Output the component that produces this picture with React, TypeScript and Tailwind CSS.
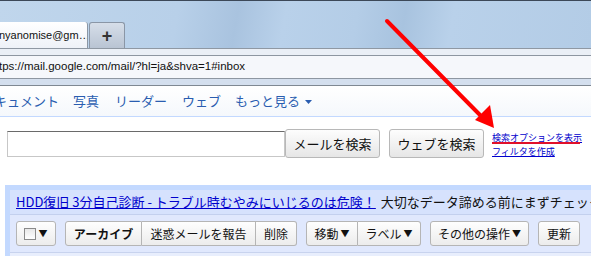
import React from "react";

const jp = { fontFamily: '"Noto Sans CJK JP", "Noto Sans", sans-serif' };
const lat = { fontFamily: '"Liberation Sans", "Noto Sans CJK JP", sans-serif' };

function TBtn({ children, className = "" }: { children: React.ReactNode; className?: string }) {
  return (
    <div
      className={`h-[25px] flex items-center justify-center border border-[#b5b5b5] bg-[linear-gradient(#fefefe,#ececec)] text-[12px] text-[#111] leading-none ${className}`}
      style={jp}
    >
      {children}
    </div>
  );
}

export default function App() {
  return (
    <div className="relative w-[591px] h-[256px] overflow-hidden bg-white">
      {/* browser title area */}
      <div className="h-[48px] border-t border-[#3c4858] bg-[linear-gradient(100deg,#c0d6ec_0%,#b8d0e9_30%,#a9c3df_40%,#b9d1ea_48%,#b4cde7_60%,#a8c3df_68%,#b9d1ea_76%,#b3cce6_100%)] flex items-end">
        <div className="w-[88px] h-[26px] bg-[linear-gradient(#ffffff,#eef2f8)] border-r border-[#8b96a4] rounded-tr-[3px] flex items-center overflow-hidden">
          <span className="text-[11px] text-[#111] whitespace-nowrap ml-[-1px]" style={lat}>
            nyanomise@gm…
          </span>
        </div>
        <div className="ml-[1px] w-[36px] h-[26px] bg-[linear-gradient(#d6dee9,#b9c4d3)] border border-b-0 border-[#8a96a6] rounded-t-[3px] flex items-center justify-center">
          <span className="text-[18px] font-bold text-[#333] leading-none" style={lat}>+</span>
        </div>
      </div>
      {/* toolbar / url */}
      <div className="h-[7px] border-t border-[#8f98a3] bg-[#eaeff6]" />
      <div className="h-[24px] border-t border-[#8d96a1] border-b bg-[#f5f7fb] flex items-center">
        <span className="text-[11.5px] text-[#111] whitespace-nowrap ml-[-1px]" style={lat}>
          tps://mail.google.com/mail/?hl=ja&amp;shva=1#inbox
        </span>
      </div>
      <div className="h-[7px] bg-[#d4dfee] border-b border-[#7f8892]" />
      {/* gmail nav */}
      <div className="h-[31px] bg-[linear-gradient(#ffffff,#f5f8fc)] border-b border-[#c3d9ff] flex items-center text-[13px] text-[#2a5db0] whitespace-nowrap" style={jp}>
        <span className="ml-[-19px]">ドキュメント</span>
        <span className="ml-[14px]">写真</span>
        <span className="ml-[16px]">リーダー</span>
        <span className="ml-[15px]">ウェブ</span>
        <span className="ml-[14px]">もっと見る</span>
        <svg className="ml-[5px] mt-[2px]" width="7" height="4" viewBox="0 0 7 4">
          <polygon points="0,0 7,0 3.5,4" fill="#2a5db0" />
        </svg>
      </div>
      {/* search row */}
      <div className="flex items-start pt-[12px] pl-[7px] h-[68px]">
        <div className="mt-[2px] w-[278px] h-[26px] border border-[#c7c7c7] border-t-[#6a6a6a] bg-white" />
        <div className="w-[95px] h-[29px] rounded-[3px] border border-[#b8b8b8] bg-[linear-gradient(#fdfdfd,#e6e6e6)] flex items-center justify-center text-[13px] text-[#111]" style={jp}>
          メールを検索
        </div>
        <div className="ml-[9px] w-[95px] h-[29px] rounded-[3px] border border-[#b8b8b8] bg-[linear-gradient(#fdfdfd,#e6e6e6)] flex items-center justify-center text-[13px] text-[#111]" style={jp}>
          ウェブを検索
        </div>
        <div className="ml-[8px] mt-[2px] flex flex-col text-[9px] leading-[14px] text-[#0000cc]" style={jp}>
          <span className="underline whitespace-nowrap">検索オプションを表示</span>
          <span className="underline whitespace-nowrap">フィルタを作成</span>
        </div>
      </div>
      {/* ad + toolbar box */}
      <div className="flex">
        <div className="w-[2px] h-[15px] bg-[#dde6f7]" />
        <div className="ml-[5px] flex-1 bg-[#c3d9ff] pt-[5px] pl-[5px]">
          <div className="bg-[#d6e2fd] h-[24px] flex items-center pl-[6px] whitespace-nowrap text-[13px]" style={jp}>
            <span className="text-[#0000cc] underline">HDD復旧 3分自己診断 - トラブル時むやみにいじるのは危険！</span>
            <span className="ml-[5px] text-[#111]">大切なデータ諦める前にまずチェック</span>
          </div>
          <div className="h-px bg-[#c3d0ee]" />
          <div className="bg-[#e0e8fd] h-[37px] flex items-center pl-[6px]">
            <TBtn className="w-[40px] rounded-[3px]">
              <span className="w-[12px] h-[12px] border border-[#8a8a8a] bg-[linear-gradient(#e8e8e8,#ffffff)]" />
              <span className="ml-[2px] text-[9px]">▼</span>
            </TBtn>
            <TBtn className="ml-[9px] w-[77px] rounded-l-[3px] font-bold">アーカイブ</TBtn>
            <TBtn className="w-[114px] border-l-0">迷惑メールを報告</TBtn>
            <TBtn className="w-[41px] border-l-0 rounded-r-[3px]">削除</TBtn>
            <TBtn className="ml-[9px] w-[52px] rounded-l-[3px]">
              移動<span className="ml-[2px] text-[9px]">▼</span>
            </TBtn>
            <TBtn className="w-[63px] border-l-0 rounded-r-[3px]">
              ラベル<span className="ml-[2px] text-[9px]">▼</span>
            </TBtn>
            <TBtn className="ml-[9px] w-[99px] rounded-[3px]">
              その他の操作<span className="ml-[2px] text-[9px]">▼</span>
            </TBtn>
            <TBtn className="ml-[9px] w-[42px] rounded-[3px]">更新</TBtn>
          </div>
          <div className="h-px bg-[#c8d3ee]" />
          <div className="h-[10px] bg-[#e8eefd]" />
        </div>
      </div>
      {/* annotations */}
      <div className="absolute left-[492px] top-[142px] w-[88px] h-[2px] bg-[#e0102a]" />
      <svg className="absolute left-0 top-0" width="591" height="256">
        <line x1="387" y1="21" x2="482" y2="117" stroke="#ff0000" strokeWidth="4" strokeLinecap="round" />
        <polygon points="494,128 475,120 490,105" fill="#ff0000" />
      </svg>
    </div>
  );
}
